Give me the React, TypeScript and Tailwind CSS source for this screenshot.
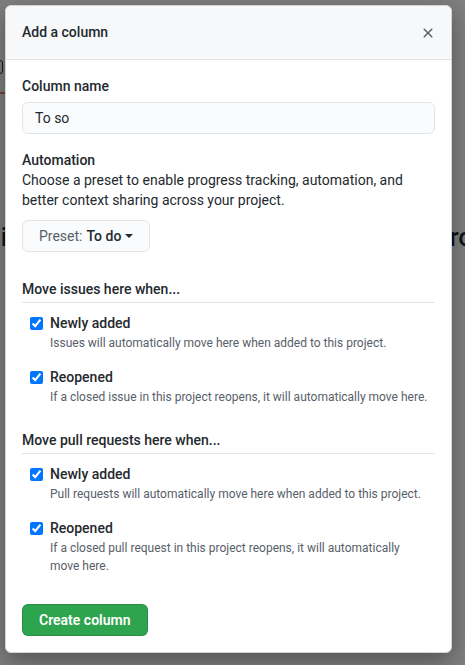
import React from 'react';

const font = { fontFamily: 'Roboto, "Liberation Sans", sans-serif' };

interface RuleProps {
  title: string;
  note: string;
}

const Rule: React.FC<RuleProps> = ({ title, note }) => (
  <label className="flex flex-col pl-[8px]">
    <span className="flex items-center gap-[7px] h-5 text-sm leading-5 font-medium text-[#24292e]">
      <input
        type="checkbox"
        defaultChecked
        className="m-0 w-[13px] h-[13px] accent-[#0075ff]"
      />
      {title}
    </span>
    <span className="mt-px pl-[20px] pr-[6px] text-xs leading-[18px] text-[#586069]">{note}</span>
  </label>
);

interface GroupProps {
  heading: string;
  items: RuleProps[];
}

const Group: React.FC<GroupProps> = ({ heading, items }) => (
  <div>
    <h3 className="pb-[3px] border-b border-[#e1e4e8] text-sm leading-5 font-medium text-[#24292e]">
      {heading}
    </h3>
    <div className="mt-[10px] flex flex-col gap-[15px]">
      {items.map((it) => (
        <Rule key={it.title} {...it} />
      ))}
    </div>
  </div>
);

export default function App() {
  return (
    <div className="relative w-[465px] h-[665px] overflow-hidden bg-white" style={font}>
      {/* page behind the dialog */}
      <div className="pt-[60px]">
        <div className="ml-[-20px] w-[23px] h-[14px] border border-[#24292e] rounded-[3px]" />
        <div className="mt-[18px] h-[2px] w-[30px] bg-[#f9826c]" />
        <div className="mt-[127px] flex justify-between text-[26px] leading-8 font-medium text-[#24292e]">
          <span className="ml-[-6px]">li</span>
          <span className="mr-[-8px]">ro</span>
        </div>
      </div>

      <div className="absolute inset-0 bg-black/50" />

      {/* dialog */}
      <div className="absolute left-[5px] top-[5px] w-[447px] bg-white border border-[#d1d5da] rounded-md shadow-[0_8px_24px_rgba(0,0,0,0.35)] overflow-hidden">
        <div className="flex items-center justify-between px-4 py-4 bg-[#f6f8fa] border-b border-[#e1e4e8]">
          <h2 className="text-sm leading-[21px] font-medium text-[#24292e]">Add a column</h2>
          <svg width="16" height="16" viewBox="0 0 16 16" className="fill-[#586069] mr-[-1px]">
            <path d="M3.72 3.72a.75.75 0 011.06 0L8 6.94l3.22-3.22a.75.75 0 111.06 1.06L9.06 8l3.22 3.22a.75.75 0 11-1.06 1.06L8 9.06l-3.22 3.22a.75.75 0 01-1.06-1.06L6.94 8 3.72 4.78a.75.75 0 010-1.06z" />
          </svg>
        </div>

        <div className="px-4 pt-4 pb-4">
          <div className="text-sm leading-5 font-medium text-[#24292e]">Column name</div>
          <div className="mt-[6px] h-8 flex items-center px-3 bg-[#fafbfc] border border-[#e1e4e8] rounded-md text-sm text-[#24292e]">
            To so
          </div>

          <div className="mt-4 text-sm leading-5 font-medium text-[#24292e]">Automation</div>
          <p className="text-sm leading-5 text-[#24292e]">
            Choose a preset to enable progress tracking, automation, and better context sharing across your project.
          </p>
          <button className="mt-[10px] h-8 px-4 flex items-center bg-[#fafbfc] border border-[#e1e4e8] rounded-md text-sm">
            <span className="text-[#586069]">Preset:</span>
            <span className="ml-1 font-medium text-[#24292e]">To do</span>
            <span className="ml-1 w-0 h-0 border-x-4 border-x-transparent border-t-4 border-t-[#24292e]" />
          </button>

          <div className="mt-[27px] flex flex-col gap-6">
            <Group
              heading="Move issues here when..."
              items={[
                { title: 'Newly added', note: 'Issues will automatically move here when added to this project.' },
                { title: 'Reopened', note: 'If a closed issue in this project reopens, it will automatically move here.' },
              ]}
            />
            <Group
              heading="Move pull requests here when..."
              items={[
                { title: 'Newly added', note: 'Pull requests will automatically move here when added to this project.' },
                { title: 'Reopened', note: 'If a closed pull request in this project reopens, it will automatically move here.' },
              ]}
            />
          </div>

          <button className="mt-[29px] h-8 px-4 bg-[#2ea44f] border border-black/15 rounded-md text-sm font-semibold text-white">
            Create column
          </button>
        </div>
      </div>
    </div>
  );
}
